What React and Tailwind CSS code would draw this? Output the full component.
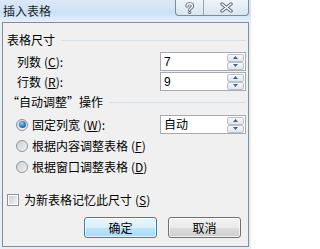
import React from "react";

function U({ children }) {
  return <span className="underline underline-offset-1">{children}</span>;
}

function Spin() {
  const btn =
    "flex-1 border border-[#b9c1cc] rounded-[2px] bg-[linear-gradient(to_bottom,#f7f9fb,#dfe5ec)] flex items-center justify-center";
  return (
    <div className="flex flex-col w-[17px] h-[16px] mr-px">
      <div className={btn}>
        <svg width="5" height="3" viewBox="0 0 5 3">
          <path d="M0 3 L2.5 0 L5 3Z" fill="#4b5e7e" />
        </svg>
      </div>
      <div className={btn}>
        <svg width="5" height="3" viewBox="0 0 5 3">
          <path d="M0 0 L2.5 3 L5 0Z" fill="#4b5e7e" />
        </svg>
      </div>
    </div>
  );
}

function Field({ value }) {
  return (
    <div className="w-[86px] h-[19px] border border-[#a6abb3] bg-white flex items-center">
      <span className="flex-1 pl-[3px] font-['Liberation_Sans','Noto_Sans_CJK_SC',sans-serif]">{value}</span>
      <Spin />
    </div>
  );
}

function Radio({ checked }) {
  return (
    <span className="w-[12px] h-[12px] rounded-full border border-[#8e9296] bg-[linear-gradient(135deg,#d2d4d6,#f7f7f7)] flex items-center justify-center shrink-0">
      {checked ? (
        <span className="w-[7px] h-[7px] rounded-full bg-[radial-gradient(circle_at_40%_35%,#9ad6f7_0%,#2d86c8_45%,#0b4a86_100%)]" />
      ) : (
        <span className="w-[8px] h-[8px] rounded-full bg-[linear-gradient(135deg,#cfd1d3,#eeeeee)]" />
      )}
    </span>
  );
}

function Header({ children }) {
  return (
    <div className="h-[16px] flex items-center pl-[4px] pr-[2px]">
      <span>{children}</span>
      <div className="flex-1 h-px bg-[#d5dfe5] ml-[6px]" />
    </div>
  );
}

export default function App() {
  return (
    <div
      lang="zh-CN"
      className="w-[251px] h-[249px] bg-[#e6eef7] flex flex-col font-['Noto_Sans_CJK_SC','Noto_Sans',sans-serif] text-[12px] text-black leading-none overflow-hidden"
    >
      <div className="h-[22px] flex items-start bg-[linear-gradient(to_bottom,#dbe8f5_0%,#d2e4f6_40%,#c9e0f6_55%,#e5f1fc_100%)]">
        <span className="pl-[3px] pt-[5px] text-[#1e1e1e]">插入表格</span>
        <div className="ml-auto mr-[2px] flex h-[16px] border border-t-0 border-[#7f8b98] rounded-b-[4px] bg-[linear-gradient(to_bottom,#eef4fa,#d9e5f1)] overflow-hidden">
          <div className="w-[28px] flex items-center justify-center border-r border-[#9aa6b3]">
            <svg width="9" height="12" viewBox="0 0 9 12">
              <path d="M2 4 C2 1 7.5 1 7.5 4 C7.5 6 4.7 6 4.7 8" fill="none" stroke="#5d6572" strokeWidth="3.2" strokeLinecap="round" />
              <circle cx="4.7" cy="10.6" r="1.5" fill="#5d6572" />
              <path d="M2 4 C2 1 7.5 1 7.5 4 C7.5 6 4.7 6 4.7 8" fill="none" stroke="#ffffff" strokeWidth="1.4" strokeLinecap="round" />
              <circle cx="4.7" cy="10.6" r="0.7" fill="#ffffff" />
            </svg>
          </div>
          <div className="w-[44px] flex items-center justify-center">
            <svg width="13" height="11" viewBox="0 0 13 11">
              <path d="M2 2 L11 9 M11 2 L2 9" stroke="#5d6572" strokeWidth="3.4" strokeLinecap="round" />
              <path d="M2 2 L11 9 M11 2 L2 9" stroke="#ffffff" strokeWidth="1.5" strokeLinecap="round" />
            </svg>
          </div>
        </div>
      </div>

      <div className="flex-1 mx-[2px] mb-[2px] border border-[#858c94] bg-[#f0f0f0] flex flex-col">
        <div className="mt-[9px]">
          <Header>表格尺寸</Header>
        </div>
        <div className="mt-[4px] h-[19px] flex items-center pl-[14px] pr-[2px]">
          <span>
            列数<span className="ml-[3px]">(<U>C</U>):</span>
          </span>
          <div className="ml-auto">
            <Field value="7" />
          </div>
        </div>
        <div className="mt-[1px] h-[19px] flex items-center pl-[14px] pr-[2px]">
          <span>
            行数<span className="ml-[3px]">(<U>R</U>):</span>
          </span>
          <div className="ml-auto">
            <Field value="9" />
          </div>
        </div>
        <div className="mt-[3px]">
          <Header>“自动调整”操作</Header>
        </div>
        <div className="mt-[4px] h-[21px] flex items-center pl-[13px] pr-[2px]">
          <Radio checked />
          <span className="ml-[4px]">
            固定列宽<span className="ml-[3px]">(<U>W</U>):</span>
          </span>
          <div className="ml-auto">
            <Field value="自动" />
          </div>
        </div>
        <div className="h-[21px] flex items-center pl-[13px]">
          <Radio />
          <span className="ml-[4px]">
            根据内容调整表格<span className="ml-[3px]">(<U>F</U>)</span>
          </span>
        </div>
        <div className="h-[21px] flex items-center pl-[13px]">
          <Radio />
          <span className="ml-[4px]">
            根据窗口调整表格<span className="ml-[3px]">(<U>D</U>)</span>
          </span>
        </div>
        <div className="mt-[12px] h-[21px] flex items-center pl-[4px]">
          <span className="w-[12px] h-[12px] border border-[#8e9296] bg-white p-px shrink-0">
            <span className="block w-full h-full bg-[linear-gradient(135deg,#cdcfd1,#f3f3f3)]" />
          </span>
          <span className="ml-[5px]">
            为新表格记忆此尺寸<span className="ml-[3px]">(<U>S</U>)</span>
          </span>
        </div>
        <div className="mt-[7px] flex pl-[81px] gap-[11px]">
          <button className="w-[73px] h-[21px] rounded-[3px] border border-[#3c7fb1] bg-[linear-gradient(to_bottom,#eaf6fd_0%,#d9f0fc_50%,#bee6fd_51%,#a7d9f5_100%)] shadow-[inset_0_0_0_1px_rgba(255,255,255,0.7)] flex items-center justify-center text-[12px] leading-none">
            确定
          </button>
          <button className="w-[73px] h-[21px] rounded-[3px] border border-[#707070] bg-[linear-gradient(to_bottom,#f2f2f2_0%,#ebebeb_50%,#dddddd_51%,#cfcfcf_100%)] shadow-[inset_0_0_0_1px_rgba(255,255,255,0.7)] flex items-center justify-center text-[12px] leading-none">
            取消
          </button>
        </div>
      </div>
    </div>
  );
}
